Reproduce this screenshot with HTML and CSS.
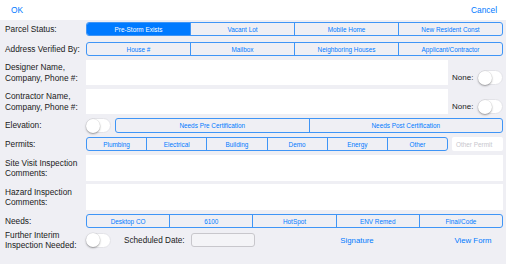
FILE: index.html
```html
<!DOCTYPE html>
<html>
<head>
<meta charset="utf-8">
<link rel="stylesheet" href="styles.css">
</head>
<body>
<div class="header">
  <span class="link">OK</span>
  <span class="link">Cancel</span>
</div>
<div class="form">
  <div class="row h14">
    <div class="label">Parcel Status:</div>
    <div class="seg">
      <span class="on">Pre-Storm Exists</span><span>Vacant Lot</span><span>Mobile Home</span><span>New Resident Const</span>
    </div>
  </div>
  <div class="row h14 mt2">
    <div class="label">Address Verified By:</div>
    <div class="seg">
      <span>House #</span><span>Mailbox</span><span>Neighboring Houses</span><span>Applicant/Contractor</span>
    </div>
  </div>
  <div class="row h25">
    <div class="label">Designer Name,<br>Company, Phone #:</div>
    <div class="input"></div>
    <div class="none">
      <span class="none-label">None:</span>
      <div class="toggle"><div class="knob"></div></div>
    </div>
  </div>
  <div class="row h25">
    <div class="label">Contractor Name,<br>Company, Phone #:</div>
    <div class="input"></div>
    <div class="none">
      <span class="none-label">None:</span>
      <div class="toggle"><div class="knob"></div></div>
    </div>
  </div>
  <div class="row h15">
    <div class="label">Elevation:</div>
    <div class="toggle"><div class="knob"></div></div>
    <div class="seg seg-elev">
      <span>Needs Pre Certification</span><span>Needs Post Certification</span>
    </div>
  </div>
  <div class="row h14">
    <div class="label">Permits:</div>
    <div class="seg">
      <span>Plumbing</span><span>Electrical</span><span>Building</span><span>Demo</span><span>Energy</span><span>Other</span>
    </div>
    <div class="other">Other Permit</div>
  </div>
  <div class="row h26">
    <div class="label">Site Visit Inspection<br>Comments:</div>
    <div class="input"></div>
  </div>
  <div class="row h26 mtm1">
    <div class="label">Hazard Inspection<br>Comments:</div>
    <div class="input"></div>
  </div>
  <div class="row h14">
    <div class="label">Needs:</div>
    <div class="seg">
      <span>Desktop CO</span><span>6100</span><span>HotSpot</span><span>ENV Remed</span><span>Final/Code</span>
    </div>
  </div>
  <div class="row h16">
    <div class="label">Further Interim<br>Inspection Needed:</div>
    <div class="toggle"><div class="knob"></div></div>
    <span class="sched">Scheduled Date:</span>
    <div class="date"></div>
    <span class="link small sig">Signature</span>
    <span class="link small view">View Form</span>
  </div>
</div>
</body>
</html>
```

FILE: styles.css
```css
html, body {
  margin: 0;
  padding: 0;
}
body {
  width: 506px;
  height: 264px;
  background: #efeff4;
  font-family: "Liberation Sans", Arial, sans-serif;
  color: #1a1a1a;
  overflow: hidden;
}
.header {
  height: 20px;
  background: #ffffff;
  display: flex;
  align-items: center;
  justify-content: space-between;
  padding: 0 9px 0 11px;
}
.link {
  color: #007aff;
  font-size: 8.4px;
}
.link.small {
  font-size: 7.8px;
}
.form {
  display: flex;
  flex-direction: column;
  gap: 4px;
  padding: 2px 3px 0 5px;
}
.row {
  display: flex;
  align-items: center;
}
.h14 { height: 14px; }
.h15 { height: 15px; }
.h16 { height: 16px; }
.h25 { height: 25px; }
.h26 { height: 26px; }
.mt2 { margin-top: 2px; }
.mtm1 { margin-top: -1px; }
.label {
  width: 81px;
  flex: none;
  font-size: 8.3px;
  line-height: 10.5px;
  white-space: nowrap;
}
.seg {
  flex: 1;
  align-self: stretch;
  display: flex;
  border: 1px solid #3f95f6;
  border-radius: 3px;
  overflow: hidden;
}
.seg span {
  flex: 1;
  display: flex;
  align-items: center;
  justify-content: center;
  font-size: 6.4px;
  color: #007aff;
  border-left: 1px solid #3f95f6;
  white-space: nowrap;
}
.seg span:first-child {
  border-left: none;
}
.seg span.on {
  background: #007aff;
  color: #ffffff;
}
.seg-elev {
  margin-left: 4px;
}
.input {
  flex: 1;
  align-self: stretch;
  background: #ffffff;
}
.none {
  align-self: flex-end;
  display: flex;
  align-items: center;
  margin-left: 4px;
  width: 51px;
  justify-content: space-between;
}
.none-label {
  font-size: 8px;
}
.toggle {
  flex: none;
  width: 25px;
  height: 15px;
  box-sizing: border-box;
  border: 1px solid #e3e3e8;
  border-radius: 8px;
  background: #ffffff;
  display: flex;
  align-items: center;
}
.knob {
  width: 14px;
  height: 14px;
  margin-left: -1px;
  border-radius: 50%;
  background: #ffffff;
  box-shadow: 0 1px 2px rgba(0, 0, 0, 0.35), 0 0 0 0.5px rgba(0, 0, 0, 0.08);
}
.other {
  width: 51px;
  margin-left: 4px;
  align-self: stretch;
  background: #ffffff;
  border-radius: 2px;
  font-size: 6.4px;
  color: #c7c7cd;
  display: flex;
  align-items: center;
  padding-left: 4px;
  box-sizing: border-box;
}
.sched {
  width: 63px;
  flex: none;
  margin-left: 13px;
  font-size: 8.2px;
  white-space: nowrap;
}
.date {
  width: 64px;
  height: 14px;
  flex: none;
  box-sizing: border-box;
  margin-left: 4px;
  border: 1px solid #c8c7cc;
  border-radius: 3px;
  background: #f4f4f7;
}
.sig {
  width: 60px;
  flex: none;
  margin-left: 72px;
  text-align: center;
}
.view {
  width: 60px;
  flex: none;
  margin-left: 56px;
  text-align: center;
}
```
